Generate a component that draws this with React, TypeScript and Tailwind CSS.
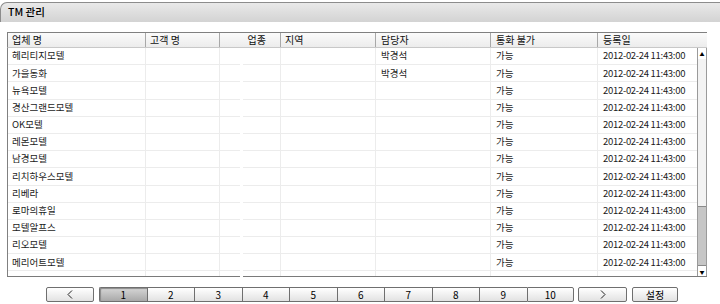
import React from "react";

const rows = [
  { name: "헤리티지모텔", manager: "박경석" },
  { name: "가을동화", manager: "박경석" },
  { name: "뉴욕모텔", manager: "" },
  { name: "경산그랜드모텔", manager: "" },
  { name: "OK모텔", manager: "" },
  { name: "레몬모텔", manager: "" },
  { name: "남경모텔", manager: "" },
  { name: "리치하우스모텔", manager: "" },
  { name: "리베라", manager: "" },
  { name: "로마의휴일", manager: "" },
  { name: "모텔알프스", manager: "" },
  { name: "리오모텔", manager: "" },
  { name: "메리어트모텔", manager: "" },
  { name: "", manager: "", blank: true },
];

const pages = ["1", "2", "3", "4", "5", "6", "7", "8", "9", "10"];

function Row({ name, manager, blank }: { name: string; manager: string; blank?: boolean }) {
  const cell = "h-full border-b border-r border-[#ececec] flex items-center shrink-0";
  return (
    <div className="flex h-[17.2px] text-[#1a1a1a]">
      <div className={`${cell} w-[138px] pl-[4px]`}>{name}</div>
      <div className={`${cell} w-[74px]`} />
      <div className="h-full w-[20px] shrink-0 border-b border-[#ececec]" />
      <div className="h-full w-[3px] shrink-0 bg-white" />
      <div className={`${cell} w-[38px]`} />
      <div className={`${cell} w-[95px]`} />
      <div className={`${cell} w-[115px] pl-[5px]`}>{manager}</div>
      <div className={`${cell} w-[107px] pl-[5px]`}>{blank ? "" : "가능"}</div>
      <div className="h-full w-[100px] shrink-0 border-b border-[#ececec] flex items-center pl-[5px] tracking-[-0.3px]">
        {blank ? "" : "2012-02-24 11:43:00"}
      </div>
    </div>
  );
}

function Btn({ children, className = "" }: { children: React.ReactNode; className?: string }) {
  return (
    <div
      className={`h-[15px] flex items-center justify-center border border-[#6f6f6f] rounded-[2px] bg-gradient-to-b from-[#ffffff] to-[#e2e2e2] ${className}`}
    >
      {children}
    </div>
  );
}

function Chevron({ left }: { left?: boolean }) {
  return (
    <svg width="6" height="9" viewBox="0 0 6 9" fill="none" stroke="#222" strokeWidth="1">
      <path d={left ? "M5 0.5 L1 4.5 L5 8.5" : "M1 0.5 L5 4.5 L1 8.5"} />
    </svg>
  );
}

export default function App() {
  return (
    <div
      className="w-[720px] h-[304px] bg-white overflow-hidden pt-[2px] text-[9.5px] leading-none text-black"
      style={{ fontFamily: '"Noto Sans CJK KR", "Noto Sans", sans-serif' }}
    >
      {/* title bar */}
      <div className="h-[20px] rounded-tl-[7px] border-t border-l border-[#8c8c8c] bg-gradient-to-b from-[#e9e9e9] to-[#d3d3d3] flex items-center pl-[7px] text-[10.5px] font-medium">
        TM 관리
      </div>

      {/* grid */}
      <div className="ml-[7px] mt-[10px] w-[700px]">
        <div className="flex h-[16px] border-t border-l border-[#808080] bg-gradient-to-b from-[#fbfbfb] to-[#ececec] border-b border-b-[#c8c8c8] text-[#111] text-[10px]">
          <div className="w-[138px] shrink-0 border-r border-[#a8a8a8] flex items-center pl-[4px]">업체 명</div>
          <div className="w-[74px] shrink-0 border-r border-[#a8a8a8] flex items-center pl-[4px]">고객 명</div>
          <div className="w-[61px] shrink-0 border-r border-[#a8a8a8] flex items-center justify-end pr-[14px]">업종</div>
          <div className="w-[95px] shrink-0 border-r border-[#a8a8a8] flex items-center pl-[4px]">지역</div>
          <div className="w-[115px] shrink-0 border-r border-[#a8a8a8] flex items-center pl-[5px]">담당자</div>
          <div className="w-[107px] shrink-0 border-r border-[#a8a8a8] flex items-center pl-[5px]">통화 불가</div>
          <div className="flex-1 flex items-center pl-[5px]">등록일</div>
        </div>

        <div className="flex h-[228px] border-l border-[#808080]">
          <div className="w-[690px] h-full overflow-hidden">
            {rows.map((r, i) => (
              <Row key={i} {...r} />
            ))}
          </div>
          {/* scrollbar */}
          <div className="w-[10px] h-full flex flex-col border-l border-r border-[#9a9a9a] bg-[#f3f3f3]">
            <div className="h-[11px] flex items-center justify-center bg-white text-[5px] text-black">▲</div>
            <div className="h-[147px]" />
            <div className="h-[60px] bg-[#c6c6c6] border-t border-b border-[#8a8a8a]" />
            <div className="flex-1 flex items-center justify-center bg-white text-[5px] text-black">▼</div>
          </div>
        </div>
        <div className="flex h-[1px]">
          <div className="w-[233px] bg-[#7a7a7a]" />
          <div className="w-[3px]" />
          <div className="flex-1 bg-[#7a7a7a]" />
        </div>
      </div>

      {/* pagination */}
      <div className="flex items-center mt-[10px] pl-[46px] text-[10px]">
        <Btn className="w-[48px]">
          <Chevron left />
        </Btn>
        <div className="flex ml-[5px]">
          {pages.map((p, i) => (
            <div
              key={p}
              className={`w-[47.5px] h-[15px] flex items-center justify-center border-y border-[#6f6f6f] ${
                i === 0
                  ? "border-l rounded-l-[2px] bg-gradient-to-b from-[#d6d6d6] to-[#a9a9a9] shadow-[inset_1px_1px_1px_#8a8a8a]"
                  : "border-l bg-gradient-to-b from-[#ffffff] to-[#e2e2e2]"
              } ${i === pages.length - 1 ? "border-r rounded-r-[2px]" : ""}`}
            >
              {p}
            </div>
          ))}
        </div>
        <Btn className="w-[49px] ml-[4px]">
          <Chevron />
        </Btn>
        <Btn className="w-[46px] ml-[5px]">설정</Btn>
      </div>
    </div>
  );
}
